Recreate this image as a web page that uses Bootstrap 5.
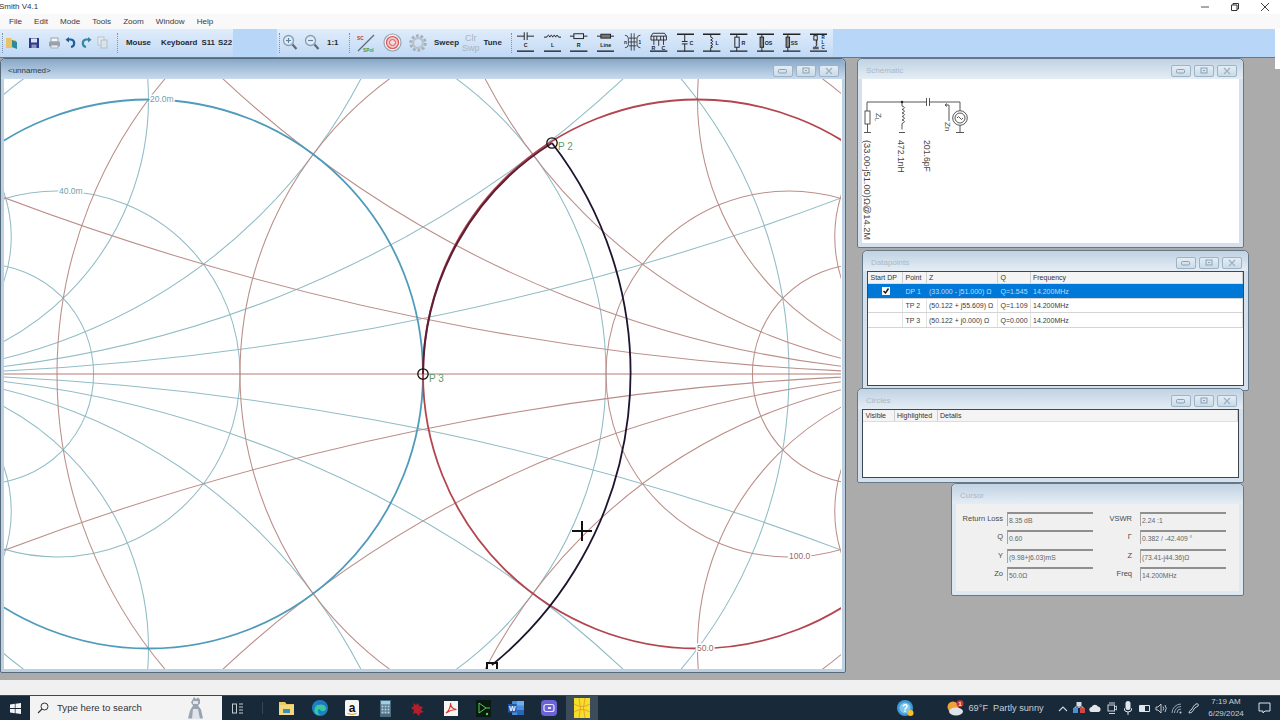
<!DOCTYPE html>
<html lang="en">
<head>
<meta charset="utf-8">
<title>Smith V4.1</title>
<link href="https://cdn.jsdelivr.net/npm/bootstrap@5.3.0/dist/css/bootstrap.min.css" rel="stylesheet">
<style>
html,body{height:720px;overflow:hidden;background:#fff;margin:0}
body{font-family:"Liberation Sans",Arial,sans-serif;font-size:8.5px;color:#333;line-height:1.1}
svg{display:block;flex:none}
svg text{font-family:"Liberation Sans",Arial,sans-serif}
.app{height:720px;width:1280px}
.titlebar{height:14px;font-size:8px;color:#333;background:#fff}
.titlebar .ttl{margin-left:-1px}
.caption{margin-left:auto;gap:0}
.caption span{width:30px;display:flex;justify-content:center}
.menubar{height:15px;background:#f9f9f9;padding-left:9px;gap:12px;font-size:8.1px;color:#3a3a3a;padding-right:5px;border:0}
.menubar span{padding-top:1px}
.toolbar{height:29px;background:#b8d6f8;border-bottom:1px solid #66798c;margin-right:5px}
.tb{height:28px;background:linear-gradient(#dfecfb,#d3e4f8 45%,#bfd8f5);position:relative;gap:0;flex:none}
.tb::before{content:"";position:absolute;left:2px;top:4px;bottom:4px;border-left:1px dotted #7d93ad}
.tb b{font-size:7.9px;color:#1f2a36;font-weight:700;white-space:nowrap}
.tb-a{width:115px;padding-left:3px}.tb-b{width:118px;padding-left:11px}.tb-c{width:44px;background:none}.tb-c::before{display:none}.tb-d{width:70px;padding-left:5px}.tb-e{width:162px;padding-left:9px}.tb-f{width:324px;padding-left:8px;gap:9.25px}
.tb-f svg{margin-bottom:4px}
.slot{width:16px;display:flex;justify-content:center;flex:none}
.slot-wide{width:18px}
.clrswp{margin-left:3px;color:#a9b5c0;font-size:9px;line-height:10px}
.mdi{height:623px;background:#ababab;position:relative;overflow:hidden}
.corner{position:absolute;top:0;right:0;width:5px;height:11px;background:#fff}
.win{position:absolute;border:1px solid #65788a;border-radius:5px 5px 2px 2px;background:#d4e1ec;display:flex;flex-direction:column;padding:0 4px 4px}
.win-title{height:20px;flex:none;display:flex;align-items:center;color:#a9b8c6;font-size:8px;margin:0 -4px;padding:4px 6px 0 8px;background:linear-gradient(#c1d2e2,#e4edf5);border-radius:5px 5px 0 0}
.win-btns{margin-left:auto;display:flex;gap:2.5px}
.win-btns span{width:20.5px;height:12px;border:1px solid #9fb3c5;border-radius:2px;background:linear-gradient(#e4edf5,#cbdbe9);display:flex;align-items:center;justify-content:center}
.client{background:#fff;flex:1 1 auto;min-height:0;overflow:hidden;position:relative}
#w-main{left:0;top:0;width:846px;height:615px;background:#bdd1e3;border-color:#56697b;padding:0 3px 3px}
#w-main .win-title{background:linear-gradient(#87a7c7,#c9dbec);color:#2f3b46;margin:0 -3px;padding-left:7px}
#w-sch{left:857px;top:0;width:387px;height:190px}
#w-dat{left:862px;top:192px;width:387px;height:141px}
#w-cir{left:857px;top:330px;width:387px;height:95px}
#w-cur{left:951px;top:425px;width:293px;height:113px;background:#dde8f1}
#w-cur .client{background:#f0f0f0}
.list{border:1px solid #3f4650;background:#fff}
.list table{margin:0;font-size:7px;color:#3a3a3a;border-collapse:collapse;width:100%;table-layout:fixed;--bs-table-bg:transparent}
.list th,.list td{padding:0 0 0 2.5px;font-weight:400;vertical-align:middle;border:0;white-space:nowrap;overflow:hidden;height:14.5px;line-height:1}
.list thead th{height:12px;background:#f4f4f4;border-right:1px solid #cfcfcf;border-bottom:1px solid #ddd;color:#333}
.list td{border-bottom:1px solid #d4d4d4;border-right:1px solid #e2e2e2}
.list tr.sel td{background:#0078d7;color:#bcdcf5;border-right-color:#0078d7}
.col-a{width:34.5px}.col-b{width:23.5px}.col-c{width:71.5px}.col-d{width:32.5px}.col-e{width:31px}.col-f{width:43px}
.chk{display:block;margin:0 auto}
.cursor-grid{display:grid;grid-template-columns:47px 86px 43px 86px;column-gap:0;row-gap:4.4px;padding:8px 0 0 0}
.cursor-grid label{font-size:7.5px;color:#4a4a4a;text-align:right;align-self:center;margin:0}
.cursor-grid .val{height:14px;border-top:2px solid #8f8f8f;border-left:1px solid #a5a5a5;font-size:6.8px;color:#666;padding:3px 0 0 1px;margin-left:4px;width:86px;white-space:nowrap}
.cursor-grid .r2{margin-left:8px}
.strip{height:15px;background:#f0f0f0;margin:0}
.taskbar{height:25px;background:#18293a;color:#d5dbe0;border-top:1px solid #3a4755}
.start{width:30px;justify-content:center}
.search{width:192px;height:24px;background:#f3f3f3;color:#333;font-size:9.6px;padding-left:7px;gap:6px;position:relative}
.search .mascot{margin-left:auto;margin-right:16px}
.tslot{width:32.8px;height:24px;display:flex;align-items:center;justify-content:center;flex:none}
.tslot.active{background:#3c4c5b}
.sep{width:15.6px;display:flex;justify-content:center;flex:none}
.sep i{display:block;width:1px;height:12px;background:#33475a}
.weather{font-size:9.2px;color:#c7ced4;white-space:nowrap;width:91px;padding-left:5px}
.tray{width:16.4px;display:flex;justify-content:center;flex:none}
.tray-help{margin-left:auto;width:20px}
.tray-wx{width:16px;margin-left:32px}
.tray-note{width:31px}
.clock{width:46px;margin-left:1px;text-align:center;font-size:8px;line-height:12px;color:#c7ced4;flex:none}
</style>
</head>
<body>
<div class="app d-flex flex-column">
  <div class="titlebar d-flex align-items-center">
    <span class="ttl">Smith V4.1</span>
    <div class="caption d-flex align-items-center">
      <span><svg width="10" height="10"><path d="M1 5h8" stroke="#555" stroke-width="1"/></svg></span>
      <span><svg width="10" height="10"><path d="M1.5 3h5.5v5.5h-5.5zM3 3V1.5h5.5V7H7" fill="none" stroke="#333" stroke-width="1"/></svg></span>
      <span><svg width="10" height="10"><path d="M1 1l8 8M9 1l-8 8" stroke="#444" stroke-width="1"/></svg></span>
    </div>
  </div>
  <nav class="menubar d-flex align-items-center">
    <span>File</span><span>Edit</span><span>Mode</span><span>Tools</span><span>Zoom</span><span>Window</span><span>Help</span>
  </nav>
  <div class="toolbar d-flex">
    <div class="tb tb-a d-flex align-items-center">
      <span class="slot slot-wide"><svg width="14" height="14" viewBox="0 0 14 14"><path d="M1 2h5l1 2h4v8H1z" fill="#e9c36a"/><path d="M7 4l5 2v7l-5-2z" fill="#2c8a9c"/></svg></span>
      <span class="slot slot-wide ms-1"><svg width="12" height="12" viewBox="0 0 12 12"><rect x="1" y="1" width="10" height="10" fill="#2c3a8c"/><rect x="3" y="1.5" width="6" height="4" fill="#dfe6f2"/><rect x="3.5" y="7.5" width="5" height="3.5" fill="#8c97c4"/></svg></span>
      <span class="slot slot-wide" style="margin-left:2px"><svg width="13" height="12" viewBox="0 0 13 12"><rect x="3" y="1" width="7" height="4" fill="#f4f6f8" stroke="#9aa4ad"/><rect x="1" y="4.5" width="11" height="5" rx="1" fill="#98a3ad"/><rect x="3" y="8" width="7" height="3" fill="#e6eaee" stroke="#8b96a0" stroke-width=".6"/></svg></span>
      <span class="slot" style="margin-left:-1px"><svg width="11" height="12" viewBox="0 0 11 12"><path d="M2 2.5h4a3.8 3.8 0 0 1 0 7.5" fill="none" stroke="#1e5f9c" stroke-width="2.2"/><path d="M4 0v5.5L0.5 2.7z" fill="#1e5f9c"/></svg></span>
      <span class="slot"><svg width="11" height="12" viewBox="0 0 11 12"><path d="M9 2.5H5a3.8 3.8 0 0 0 0 7.5" fill="none" stroke="#3486a8" stroke-width="2.2"/><path d="M7 0v5.5l3.5-2.8z" fill="#3486a8"/></svg></span>
      <span class="slot"><svg width="11" height="13" viewBox="0 0 11 13"><rect x="1" y="1" width="6" height="8" fill="#e6edf4" stroke="#bac5cf"/><rect x="4" y="4" width="6" height="8" fill="#dbe3ea" stroke="#b3bec8"/></svg></span>
    </div>
    <div class="tb tb-b d-flex align-items-center">
      <b>Mouse</b><b style="margin-left:10px">Keyboard</b><b style="margin-left:4px">S11</b><b style="margin-left:3px">S22</b>
    </div>
    <div class="tb tb-c"></div>
    <div class="tb tb-d d-flex align-items-center">
      <span class="slot"><svg width="16" height="17" viewBox="0 0 16 17"><circle cx="6.5" cy="6.5" r="5" fill="#dceafa" stroke="#8a9cae" stroke-width="1.3"/><path d="M4 6.5h5M6.5 4v5" stroke="#5f7f9f" stroke-width="1.1"/><path d="M10.5 10.5l4 4.5" stroke="#5d6b78" stroke-width="2.2"/></svg></span>
      <span class="slot" style="margin-left:6px"><svg width="16" height="17" viewBox="0 0 16 17"><circle cx="6.5" cy="6.5" r="5" fill="#dceafa" stroke="#8a9cae" stroke-width="1.3"/><path d="M4 6.5h5" stroke="#5f7f9f" stroke-width="1.1"/><path d="M10.5 10.5l4 4.5" stroke="#5d6b78" stroke-width="2.2"/></svg></span>
      <b style="margin-left:7px">1:1</b>
    </div>
    <div class="tb tb-e d-flex align-items-center">
      <svg width="20" height="20" viewBox="0 0 20 20"><path d="M2 18L18 2" stroke="#5f6c78" stroke-width="1.2"/><text x="1" y="7" font-size="4.8" font-weight="700" fill="#c8343c">SC</text><text x="7" y="19" font-size="4.8" font-weight="700" fill="#3a9a4a">SPol</text></svg>
      <svg width="19" height="19" viewBox="0 0 19 19" style="margin-left:7px"><circle cx="9.5" cy="9.5" r="8.5" fill="#eef3f8" stroke="#98a4ae" stroke-width="1.2"/><circle cx="9.5" cy="9.5" r="6" fill="#f4c6c6" stroke="#d9545a" stroke-width="1.2"/><circle cx="9.5" cy="9.5" r="3" fill="#f7dcdc" stroke="#d9545a" stroke-width="1"/></svg>
      <svg width="20" height="20" viewBox="0 0 20 20" style="margin-left:6px"><circle cx="10" cy="10" r="7" fill="none" stroke="#a3afb9" stroke-width="3.4" stroke-dasharray="2.6 1.8"/><circle cx="10" cy="10" r="5" fill="none" stroke="#b9c4cd" stroke-width="2.6"/></svg>
      <b style="margin-left:6px">Sweep</b>
      <span class="clrswp d-flex flex-column align-items-center"><span>Clr</span><span>Swp</span></span>
      <b style="margin-left:4px">Tune</b>
    </div>
    <div class="tb tb-f d-flex align-items-center">
      <svg width="17.4" height="24" viewBox="0 0 18 24"><path d="M0 7h7.5M10.5 7H18M7.5 3v8M10.5 3v8" stroke="#222" fill="none"/><text x="9" y="18" font-size="5.5" font-weight="700" text-anchor="middle" fill="#222">C</text><path d="M0 22.5h18" stroke="#222" stroke-width="1.4"/></svg>
      <svg width="17.4" height="24" viewBox="0 0 18 24"><path d="M0 8h3q1.5-4 3 0q1.5-4 3 0q1.5-4 3 0q1.5-4 3 0h3" stroke="#222" fill="none"/><text x="9" y="18" font-size="5.5" font-weight="700" text-anchor="middle" fill="#222">L</text><path d="M0 22.5h18" stroke="#222" stroke-width="1.4"/></svg>
      <svg width="17.4" height="24" viewBox="0 0 18 24"><path d="M0 7h4M14 7h4" stroke="#222"/><rect x="4" y="4.5" width="10" height="5" fill="none" stroke="#222"/><text x="9" y="18" font-size="5.5" font-weight="700" text-anchor="middle" fill="#222">R</text><path d="M0 22.5h18" stroke="#222" stroke-width="1.4"/></svg>
      <svg width="17.4" height="24" viewBox="0 0 18 24"><path d="M0 7h4M14 7h4" stroke="#222"/><rect x="4" y="5" width="10" height="4" fill="#777" stroke="#222"/><text x="9" y="18" font-size="5.5" font-weight="700" text-anchor="middle" fill="#222">Line</text><path d="M0 22.5h18" stroke="#222" stroke-width="1.4"/></svg>
      <svg width="17.4" height="24" viewBox="0 0 18 24"><path d="M1 6q3 0 3.5 3v7q-.5 3-3.5 3M17 6q-3 0-3.5 3v7q.5 3 3.5 3M7.5 4v18M10.500 4v18M5 9h8M5 13h8M5 17h8" stroke="#222" fill="none" stroke-width=".8"/><text x="0" y="15.500" font-size="5" font-weight="700" fill="#222">n</text><text x="15" y="15.500" font-size="5" font-weight="700" fill="#222">1</text></svg>
      <svg width="17.4" height="24" viewBox="0 0 18 24"><path d="M3 4h12l2 3v4H1V7zM1 7h16M4 7v4M7 7v4M11 7v4M14 7v4M9 11v6M4 11v5M14 11v5" stroke="#222" fill="none" stroke-width=".9"/><text x="1.5" y="20.8" font-size="5.5" font-weight="700" fill="#222">R</text><text x="12" y="20.8" font-size="5.5" font-weight="700" fill="#222">C</text><path d="M0 22.5h18" stroke="#222" stroke-width="1.4"/></svg>
      <svg width="17.4" height="24" viewBox="0 0 18 24"><path d="M0 5h18M0 22.5h18" stroke="#222" stroke-width="1.4"/><path d="M8 5v7.5M8 15v7.5M5 12.5h6M5 15h6" stroke="#222" fill="none"/><text x="13" y="16" font-size="5.5" font-weight="700" fill="#222">C</text></svg>
      <svg width="17.4" height="24" viewBox="0 0 18 24"><path d="M0 5h18M0 22.5h18" stroke="#222" stroke-width="1.4"/><path d="M8 5v3q4 1 0 3q4 1 0 3q4 1 0 3q4 1 0 2v3.5" stroke="#222" fill="none"/><text x="13" y="16" font-size="5.5" font-weight="700" fill="#222">L</text></svg>
      <svg width="17.4" height="24" viewBox="0 0 18 24"><path d="M0 5h18M0 22.5h18" stroke="#222" stroke-width="1.4"/><path d="M7 5v3M7 18.5v4" stroke="#222"/><rect x="5" y="8" width="4.5" height="10.5" fill="none" stroke="#222"/><text x="12" y="16" font-size="5.5" font-weight="700" fill="#222">R</text></svg>
      <svg width="17.4" height="24" viewBox="0 0 18 24"><path d="M0 5h18M0 22.5h18" stroke="#222" stroke-width="1.4"/><path d="M5 5v3M5 18.5v4" stroke="#222"/><rect x="3.2" y="8" width="3.6" height="10.5" fill="#888" stroke="#222"/><text x="8" y="16" font-size="5.5" font-weight="700" fill="#222">OS</text></svg>
      <svg width="17.4" height="24" viewBox="0 0 18 24"><path d="M0 5h18M0 22.5h18" stroke="#222" stroke-width="1.4"/><path d="M5 5v3M5 18.5v4" stroke="#222"/><rect x="3.2" y="8" width="3.6" height="10.5" fill="#888" stroke="#222"/><text x="8" y="16" font-size="5.5" font-weight="700" fill="#222">SS</text></svg>
      <svg width="17.4" height="24" viewBox="0 0 18 24"><path d="M0 5h18M0 22.5h18" stroke="#222" stroke-width="1.4"/><rect x="4" y="6.5" width="3.5" height="4.5" fill="none" stroke="#222"/><path d="M6 11q3 1 0 2q3 1 0 2q3 1 0 2v1.5M3 18.5h6M3 20h6" stroke="#222" fill="none" stroke-width=".9"/><text x="12" y="10" font-size="4.6" font-weight="700" fill="#222">R</text><text x="12" y="15" font-size="4.6" font-weight="700" fill="#222">L</text><text x="12" y="20" font-size="4.6" font-weight="700" fill="#222">C</text></svg>
    </div>
  </div>

  <div class="mdi">
    <div class="corner"></div>
    <div class="win" id="w-main">
      <div class="win-title">&lt;unnamed&gt;
        <div class="win-btns">
          <span><svg width="9" height="6"><rect x=".5" y="1.5" width="8" height="3.5" rx="1" fill="none" stroke="#8aa0b4"/></svg></span>
          <span><svg width="8" height="7"><rect x="1" y="1" width="6" height="5" fill="none" stroke="#8aa0b4"/><rect x="3" y="3" width="2" height="1" fill="#8aa0b4"/></svg></span>
          <span><svg width="8" height="8"><path d="M1 1l6 6M7 1l-6 6" stroke="#9db0c1" stroke-width="1.2"/></svg></span>
        </div>
      </div>
      <div class="client">
        <svg width="837" height="590" viewBox="4 79 837 590">
          <g fill="none" stroke="#90bcc6" stroke-width="1.05">
            <circle cx="331.5" cy="374" r="457.5"/><circle cx="240" cy="374" r="366"/><circle cx="57" cy="374" r="183"/><circle cx="-16.2" cy="374" r="109.8"/>
            <circle cx="-126" cy="-2371" r="2745"/><circle cx="-126" cy="3119" r="2745"/>
            <circle cx="-126" cy="-724" r="1098"/><circle cx="-126" cy="1472" r="1098"/>
            <circle cx="-126" cy="-175" r="549"/><circle cx="-126" cy="923" r="549"/>
            <circle cx="-126" cy="99.5" r="274.5"/><circle cx="-126" cy="648.5" r="274.5"/>
            <circle cx="-126" cy="236.75" r="137.25"/><circle cx="-126" cy="511.25" r="137.25"/>
          </g>
          <g fill="none" stroke="#bb8e88" stroke-width="1.05">
            <circle cx="514.5" cy="374" r="457.5"/><circle cx="606" cy="374" r="366"/><circle cx="789" cy="374" r="183"/><circle cx="862.2" cy="374" r="109.8"/>
            <circle cx="972" cy="-2371" r="2745"/><circle cx="972" cy="3119" r="2745"/>
            <circle cx="972" cy="-724" r="1098"/><circle cx="972" cy="1472" r="1098"/>
            <circle cx="972" cy="-175" r="549"/><circle cx="972" cy="923" r="549"/>
            <circle cx="972" cy="99.5" r="274.5"/><circle cx="972" cy="648.5" r="274.5"/>
            <circle cx="972" cy="236.75" r="137.25"/><circle cx="972" cy="511.25" r="137.25"/>
            <path d="M0 374H845" stroke="#b57a74"/>
          </g>
          <circle cx="148.5" cy="374" r="274.5" fill="none" stroke="#4f9bbb" stroke-width="1.8"/>
          <circle cx="697.5" cy="374" r="274.5" fill="none" stroke="#b4454f" stroke-width="1.8"/>
          <path d="M423 374A274.5 274.5 0 0 1 552 143" fill="none" stroke="#5c1f36" stroke-width="2"/>
          <path d="M552 143A376.6 376.6 0 0 1 492 665" fill="none" stroke="#1f1430" stroke-width="1.8"/>
          <g font-size="8.5" stroke="#fff" stroke-width="3" paint-order="stroke">
            <text x="150" y="102" fill="#6f9fae">20.0m</text>
            <text x="59" y="194" fill="#6f9fae">40.0m</text>
            <text x="789" y="559" fill="#9a6a66">100.0</text>
            <text x="697" y="651" fill="#9a6a66">50.0</text>
          </g>
          <circle cx="552" cy="143" r="5.2" fill="none" stroke="#111" stroke-width="1.3"/>
          <circle cx="423" cy="374" r="5.2" fill="none" stroke="#111" stroke-width="1.3"/>
          <rect x="487" y="663" width="10" height="10" fill="none" stroke="#111" stroke-width="2"/>
          <g font-size="10" fill="#5f9c62"><text x="558" y="150">P 2</text><text x="429" y="382">P 3</text></g>
          <path d="M572 531h20M582 521v20" stroke="#111" stroke-width="2"/>
        </svg>
      </div>
    </div>

    <div class="win" id="w-sch">
      <div class="win-title">Schematic
        <div class="win-btns">
          <span><svg width="9" height="6"><rect x=".5" y="1.5" width="8" height="3.5" rx="1" fill="none" stroke="#8aa0b4"/></svg></span>
          <span><svg width="8" height="7"><rect x="1" y="1" width="6" height="5" fill="none" stroke="#8aa0b4"/><rect x="3" y="3" width="2" height="1" fill="#8aa0b4"/></svg></span>
          <span><svg width="8" height="8"><path d="M1 1l6 6M7 1l-6 6" stroke="#9db0c1" stroke-width="1.2"/></svg></span>
        </div>
      </div>
      <div class="client">
        <svg width="379" height="164" viewBox="862 79 379 164">
          <g fill="none" stroke="#444" stroke-width=".9">
            <path d="M867 111V102H926M931 102H960V110.5"/>
            <path d="M926.5 98v8M929.5 98v8M926 102h1M929.5 102h1.5"/>
            <rect x="865" y="111" width="5" height="13"/>
            <path d="M867.5 124v8M864 132.5h7"/>
            <path d="M902 102v4q5 1.5 0 3.500q5 1.5 0 3.500q5 1.5 0 3.500q5 1.5 0 3.500q5 1.5 0 3.500v6M899 132.5h6"/>
            <circle cx="960" cy="118" r="7.3"/><circle cx="960" cy="118" r="5"/>
            <path d="M957 118q1.5-3 3 0t3 0"/>
            <path d="M960 125.5v7M956 132.5h8"/>
            <path d="M949 121V105h-3.5M947 103.5l-2 1.5 2 1.5"/>
          </g>
          <circle cx="902" cy="102" r="1.2" fill="#222"/>
          <g font-size="8.7" fill="#444">
            <text transform="translate(876 113) rotate(90)" font-size="8">Z<tspan font-size="5.5" dy="1.5">L</tspan></text>
            <text transform="translate(945 122) rotate(90)" font-size="8">Zn</text>
            <text transform="translate(863.5 140) rotate(90)" font-size="9.3">(33.00-j51.00)Ω@14.2M</text>
            <text transform="translate(898 140) rotate(90)">472.1nH</text>
            <text transform="translate(924 140) rotate(90)">201.6pF</text>
          </g>
        </svg>
      </div>
    </div>

    <div class="win" id="w-dat">
      <div class="win-title">Datapoints
        <div class="win-btns">
          <span><svg width="9" height="6"><rect x=".5" y="1.5" width="8" height="3.5" rx="1" fill="none" stroke="#8aa0b4"/></svg></span>
          <span><svg width="8" height="7"><rect x="1" y="1" width="6" height="5" fill="none" stroke="#8aa0b4"/><rect x="3" y="3" width="2" height="1" fill="#8aa0b4"/></svg></span>
          <span><svg width="8" height="8"><path d="M1 1l6 6M7 1l-6 6" stroke="#9db0c1" stroke-width="1.2"/></svg></span>
        </div>
      </div>
      <div class="client list">
        <table class="table">
          <colgroup><col class="col-a"><col class="col-b"><col class="col-c"><col class="col-d"><col></colgroup>
          <thead><tr><th>Start DP</th><th>Point</th><th>Z</th><th>Q</th><th>Frequency</th></tr></thead>
          <tbody>
            <tr class="sel"><td><svg class="chk" width="8" height="8" viewBox="0 0 8 8"><rect width="8" height="8" fill="#fff"/><path d="M1.5 4l2 2 3-4.5" fill="none" stroke="#111" stroke-width="1.4"/></svg></td><td>DP 1</td><td>(33.000 - j51.000) Ω</td><td>Q=1.545</td><td>14.200MHz</td></tr>
            <tr><td></td><td>TP 2</td><td>(50.122 + j55.609) Ω</td><td>Q=1.109</td><td>14.200MHz</td></tr>
            <tr><td></td><td>TP 3</td><td>(50.122 + j0.000) Ω</td><td>Q=0.000</td><td>14.200MHz</td></tr>
          </tbody>
        </table>
      </div>
    </div>

    <div class="win" id="w-cir">
      <div class="win-title">Circles
        <div class="win-btns">
          <span><svg width="9" height="6"><rect x=".5" y="1.5" width="8" height="3.5" rx="1" fill="none" stroke="#8aa0b4"/></svg></span>
          <span><svg width="8" height="7"><rect x="1" y="1" width="6" height="5" fill="none" stroke="#8aa0b4"/><rect x="3" y="3" width="2" height="1" fill="#8aa0b4"/></svg></span>
          <span><svg width="8" height="8"><path d="M1 1l6 6M7 1l-6 6" stroke="#9db0c1" stroke-width="1.2"/></svg></span>
        </div>
      </div>
      <div class="client list">
        <table class="table">
          <colgroup><col class="col-e"><col class="col-f"><col></colgroup>
          <thead><tr><th>Visible</th><th>Highlighted</th><th>Details</th></tr></thead>
        </table>
      </div>
    </div>

    <div class="win" id="w-cur">
      <div class="win-title">Cursor</div>
      <div class="client">
        <div class="cursor-grid">
          <label>Return Loss</label><div class="val">8.35 dB</div><label>VSWR</label><div class="val r2">2.24 :1</div>
          <label>Q</label><div class="val">0.60</div><label>Γ</label><div class="val r2">0.382 / -42.409 °</div>
          <label>Y</label><div class="val">(9.98+j6.03)mS</div><label>Z</label><div class="val r2">(73.41-j44.36)Ω</div>
          <label>Zo</label><div class="val">50.0Ω</div><label>Freq</label><div class="val r2">14.200MHz</div>
        </div>
      </div>
    </div>
  </div>

  <div class="strip"></div>

  <div class="taskbar d-flex align-items-center">
    <div class="start d-flex align-items-center">
      <svg width="11" height="11" viewBox="0 0 11 11"><path d="M0 1.5l4.800-.7v4.300H0zM5.500.7L11 0v5.100H5.500zM0 5.900h4.800v4.300L0 9.500zM5.500 5.900H11V11l-5.500-.7z" fill="#f2f4f6"/></svg>
    </div>
    <div class="search d-flex align-items-center">
      <svg width="12" height="12" viewBox="0 0 12 12"><circle cx="7.5" cy="4.5" r="3.5" fill="none" stroke="#333"/><path d="M5 7l-4 4" stroke="#333" stroke-width="1.1"/></svg>
      <span style="margin-left:2px">Type here to search</span>
      <svg class="mascot" width="20" height="24" viewBox="0 0 20 24"><path d="M8 1l2 2 2-1.500 2 2v4l-2 2 3 4 2 9H2l2-8 3-5-2-3z" fill="#9aa3b0"/><path d="M7 5h5v3H7z" fill="#e3e5ea"/><path d="M7 13l5 0 2 10H6z" fill="#dfe3ea"/></svg>
    </div>
    <div class="tslot"><svg width="12" height="11" viewBox="0 0 12 11"><rect x=".5" y="1" width="4" height="9" fill="none" stroke="#c3cbd2"/><path d="M7 1h4M7 4h4M7 7h4M7 10h4" stroke="#c3cbd2"/></svg></div>
    <div class="sep"><i></i></div>
    <div class="tslot"><svg width="15" height="14" viewBox="0 0 15 14"><path d="M0 1h6l1.500 2H15v11H0z" fill="#eccb66"/><rect y="4" width="15" height="10" fill="#f4d97c"/><rect x="4" y="8" width="7" height="4" fill="#3e8fb8"/></svg></div>
    <div class="tslot"><svg width="16" height="16" viewBox="0 0 16 16"><circle cx="8" cy="8" r="8" fill="#1b83c4"/><path d="M2.500 10C3 5 8 3 11 4.500 14 6 15 9 13 10.500 11 12 8 11 8 9 5 9 5 13 8 15 4 15 2 13 2.500 10z" fill="#37c8a0"/><path d="M5 2.500c4-2 10 0 10.500 6-1-3-4-4.500-7-4-2 .3-3 1-3.500-2z" fill="#2a6fc0"/></svg></div>
    <div class="tslot"><svg width="14" height="16" viewBox="0 0 14 16"><rect width="14" height="16" rx="1.5" fill="#f6f6f6"/><text x="7" y="11.5" font-size="12" font-weight="700" text-anchor="middle" fill="#111">a</text><path d="M2.500 13.500q4.500 2 9 0" stroke="#e8961e" fill="none"/></svg></div>
    <div class="tslot"><svg width="11" height="17" viewBox="0 0 11 17"><rect width="11" height="17" fill="#4b6b80"/><rect x="1" y="1" width="9" height="3.5" fill="#9ccfe8"/><path d="M1.500 6.500h2M4.500 6.500h2M7.500 6.500h2M1.500 9.500h2M4.500 9.500h2M7.500 9.500h2M1.500 12.500h2M4.500 12.500h2M7.500 12.500h2" stroke="#bcd2de" stroke-width="2"/></svg></div>
    <div class="tslot"><svg width="15" height="15" viewBox="0 0 15 15"><path d="M3 2l3 2 2-2 1 3 4 1-2 3 3 2-4 1-1 3-3-3-3 1 1-4-3-2 3-2z" fill="#b51e28"/></svg></div>
    <div class="tslot"><svg width="14" height="15" viewBox="0 0 14 15"><rect width="14" height="15" fill="#f5f5f5"/><path d="M2 12c3-2 5-7 4.500-10 0 4 2 6 6 6.500-4 0-7 1-10.500 3.500z" fill="none" stroke="#d9392e" stroke-width="1.2"/></svg></div>
    <div class="tslot"><svg width="15" height="17" viewBox="0 0 15 17"><rect width="15" height="17" fill="#0b1a10"/><path d="M3 3l7 5-7 5zM10 8h4" fill="none" stroke="#4fd05a"/><circle cx="11" cy="14" r="1.2" fill="#4fd05a"/></svg></div>
    <div class="tslot"><svg width="16" height="14" viewBox="0 0 16 14"><rect x="4" width="12" height="14" rx="1" fill="#4a8fdc"/><rect x="9" y="0" width="7" height="4.5" fill="#6eb0ee"/><rect x="9" y="9" width="7" height="5" fill="#2b64b8"/><rect y="3" width="8.5" height="8.5" fill="#1f57ab"/><text x="4.200" y="9.800" font-size="7" font-weight="700" text-anchor="middle" fill="#fff">W</text></svg></div>
    <div class="tslot"><svg width="16" height="16" viewBox="0 0 16 16"><rect width="16" height="16" rx="4" fill="#6e62d8"/><rect x="3" y="4.5" width="10" height="7" rx="2" fill="none" stroke="#e6e6fa" stroke-width="1.2"/><rect x="7" y="7" width="3" height="2" fill="#e6e6fa"/></svg></div>
    <div class="tslot active"><svg width="16" height="20" viewBox="0 0 16 20"><rect width="16" height="20" fill="#f5e029"/><path d="M0 6q8 5 16 0M0 14q8-5 16 0M5 0q3 10 0 20M11 0q-3 10 0 20" fill="none" stroke="#e89a2c" stroke-width=".9"/></svg></div>

    <div class="tray tray-help"><svg width="17" height="17" viewBox="0 0 17 17"><circle cx="8" cy="8" r="8" fill="#3e9ad6"/><circle cx="8" cy="8" r="5.5" fill="#7fc4ea"/><text x="8" y="11.5" font-size="10" font-weight="700" text-anchor="middle" fill="#fff">?</text><circle cx="13.5" cy="13" r="3" fill="#f2c230"/></svg></div>
    <div class="tray tray-wx"><svg width="17" height="16" viewBox="0 0 17 16"><circle cx="6" cy="7" r="5.5" fill="#f0a23a"/><ellipse cx="9" cy="11.5" rx="7" ry="4" fill="#dfe4ea"/><circle cx="13" cy="3.5" r="3.5" fill="#c9343a"/><text x="13" y="5.8" font-size="5.5" font-weight="700" text-anchor="middle" fill="#fff">1</text></svg></div>
    <div class="weather">69°F&nbsp; Partly sunny</div>
    <div class="tray"><svg width="10" height="7"><path d="M1 6l4-4 4 4" fill="none" stroke="#cfd5da" stroke-width="1.1"/></svg></div>
    <div class="tray"><svg width="12" height="12" viewBox="0 0 12 12"><rect x="3.5" y="0" width="5" height="4" fill="#d8dde2"/><rect y="6" width="5" height="5" fill="#4d8fd0"/><rect x="7" y="6" width="5" height="5" fill="#c94a44"/><path d="M6 4v2M2 6V5h8v1" stroke="#d8dde2"/></svg></div>
    <div class="tray"><svg width="12" height="8" viewBox="0 0 12 8"><path d="M3 8a2.5 2.5 0 0 1-.4-5A3.5 3.5 0 0 1 9 2.5 2.8 2.8 0 0 1 9.5 8z" fill="#e2e6ea"/></svg></div>
    <div class="tray"><svg width="10" height="13" viewBox="0 0 10 13"><rect x="1" y="3" width="6.5" height="6" fill="none" stroke="#cfd5da"/><path d="M2 1h6M2 11.5h6" stroke="#cfd5da"/><path d="M7.5 5l2-1v4l-2-1" fill="none" stroke="#cfd5da" stroke-width=".8"/></svg></div>
    <div class="tray"><svg width="8" height="14" viewBox="0 0 8 14"><rect x="1.5" y="0" width="5" height="9" rx="2.5" fill="#e2e6ea"/><path d="M0 7a4 4 0 0 0 8 0M4 11v3" fill="none" stroke="#e2e6ea"/></svg></div>
    <div class="tray"><svg width="12" height="7" viewBox="0 0 12 7"><rect width="11" height="7" rx="1" fill="#e2e6ea"/><rect x="6" y="1" width="4" height="5" fill="#18293a"/></svg></div>
    <div class="tray"><svg width="12" height="11" viewBox="0 0 12 11"><path d="M1 4h2l3-3v9L3 7H1z" fill="none" stroke="#cfd5da" stroke-width=".9"/><path d="M8 3.5q1.5 2 0 4M10 2q2.5 3.5 0 7" fill="none" stroke="#cfd5da" stroke-width=".9"/></svg></div>
    <div class="tray"><svg width="12" height="11" viewBox="0 0 12 11"><path d="M1 10a9 9 0 0 1 9-9M3.5 10a6.5 6.5 0 0 1 6.5-6.5M6 10a4 4 0 0 1 4-4" fill="none" stroke="#9aa5ae"/><circle cx="9.5" cy="9.5" r="1" fill="#cfd5da"/></svg></div>
    <div class="tray"><svg width="12" height="12" viewBox="0 0 12 12"><path d="M1 11c0-3 2-2 3-4s2-4 4-5 3 1 2 2-3 1-4 3-2 4-5 4z" fill="none" stroke="#cfd5da"/></svg></div>
    <div class="clock">7:19 AM<br>6/29/2024</div>
    <div class="tray tray-note"><svg width="13" height="12" viewBox="0 0 13 12"><path d="M1 1h11v8H7L5 11V9H1z" fill="none" stroke="#dfe3e7"/></svg></div>
  </div>
</div>
</body>
</html>
